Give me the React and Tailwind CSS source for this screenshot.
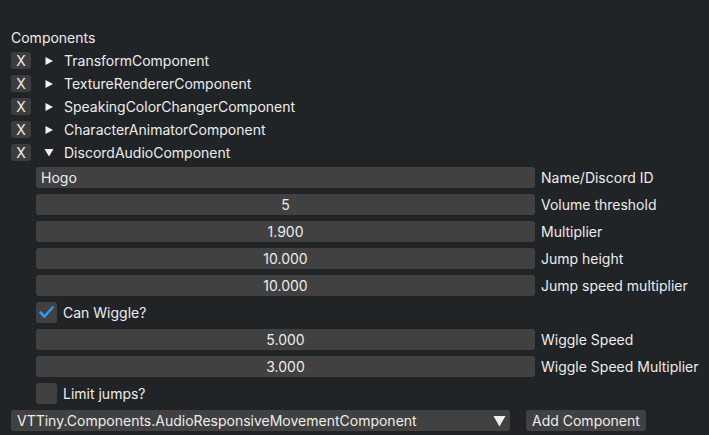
import React from "react";

const font = { fontFamily: "Inter, 'Noto Sans', sans-serif" };

function Tri({ down }) {
  return down ? (
    <svg width="10" height="9" viewBox="0 0 10 9" className="shrink-0">
      <path d="M0.5 1 L9.5 1 L5 8.5 Z" fill="#f0f0f0" />
    </svg>
  ) : (
    <svg width="10" height="10" viewBox="0 0 10 10" className="shrink-0">
      <path d="M1.5 1 L9 5 L1.5 9 Z" fill="#f0f0f0" />
    </svg>
  );
}

function CompRow({ name, open }) {
  return (
    <div className="flex items-center h-[17px]">
      <div className="w-[20px] h-[17px] bg-[#3d3d3d] rounded-[3px] flex items-center justify-center leading-none">
        X
      </div>
      <div className="w-[33px] flex justify-center pl-[3px]">
        <Tri down={open} />
      </div>
      <span>{name}</span>
    </div>
  );
}

function Field({ value, label, left }) {
  return (
    <div className="flex items-center h-[21px] gap-[6px]">
      <div
        className={
          "w-[499px] h-[21px] bg-[#414141] rounded-[3px] flex items-center " +
          (left ? "justify-start pl-[5px]" : "justify-center")
        }
      >
        {value}
      </div>
      <span>{label}</span>
    </div>
  );
}

function Check({ checked, label }) {
  return (
    <div className="flex items-center h-[21px] gap-[6px]">
      <div className="w-[21px] h-[21px] bg-[#414141] rounded-[3px] flex items-center justify-center">
        {checked && (
          <svg width="15" height="13" viewBox="0 0 15 13">
            <path d="M1.5 6.5 L5.5 10.5 L13.5 1.5" fill="none" stroke="#2a9bef" strokeWidth="2.6" strokeLinecap="round" strokeLinejoin="round" />
          </svg>
        )}
      </div>
      <span>{label}</span>
    </div>
  );
}

export default function App() {
  return (
    <div
      className="w-[709px] h-[435px] bg-[#212427] text-[#ececec] text-[14px] leading-[17px] overflow-hidden pt-[29px] pl-[11px]"
      style={font}
    >
      <div className="flex flex-col gap-[6px]">
        <div className="h-[17px]">Components</div>
        <CompRow name="TransformComponent" />
        <CompRow name="TextureRendererComponent" />
        <CompRow name="SpeakingColorChangerComponent" />
        <CompRow name="CharacterAnimatorComponent" />
        <CompRow name="DiscordAudioComponent" open />
        <div className="flex flex-col gap-[6px] ml-[25px]">
          <Field value="Hogo" label="Name/Discord ID" left />
          <Field value="5" label="Volume threshold" />
          <Field value="1.900" label="Multiplier" />
          <Field value="10.000" label="Jump height" />
          <Field value="10.000" label="Jump speed multiplier" />
          <Check checked label="Can Wiggle?" />
          <Field value="5.000" label="Wiggle Speed" />
          <Field value="3.000" label="Wiggle Speed Multiplier" />
          <Check label="Limit jumps?" />
        </div>
        <div className="flex items-center h-[21px] gap-[16px]">
          <div className="w-[499px] h-[21px] bg-[#414141] rounded-[3px] flex items-center pl-[6px] pr-[4px] justify-between">
            <span>VTTiny.Components.AudioResponsiveMovementComponent</span>
            <svg width="13" height="12" viewBox="0 0 13 12">
              <path d="M0.5 1 L12.5 1 L6.5 11.5 Z" fill="#f0f0f0" />
            </svg>
          </div>
          <div className="h-[21px] bg-[#414141] rounded-[3px] flex items-center px-[6px]">
            Add Component
          </div>
        </div>
      </div>
    </div>
  );
}
